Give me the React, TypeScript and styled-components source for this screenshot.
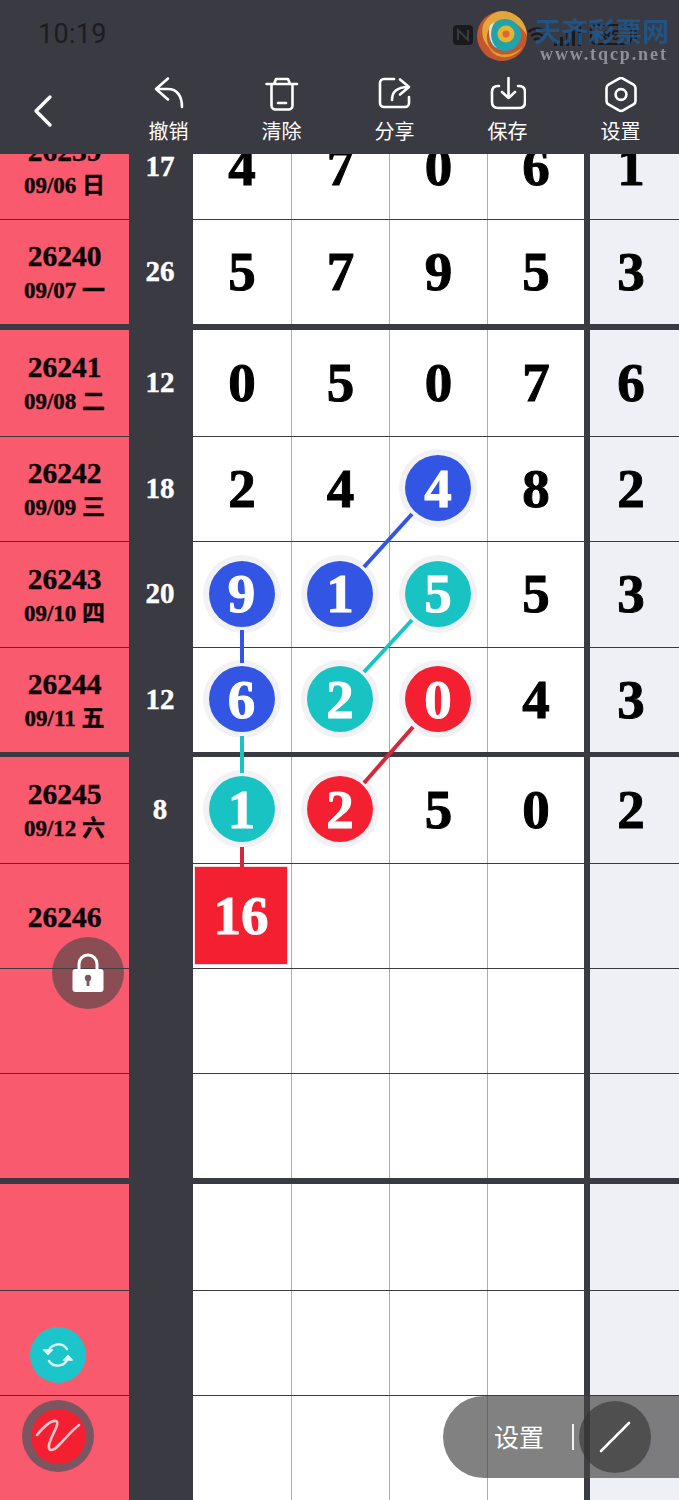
import React from "react";
import styled, { createGlobalStyle } from "styled-components";

const DARK = "#3a3a42";
const BLUE = "#3355e3";
const TEAL = "#19c3c4";
const RED = "#f42032";
const SERIF = `"Liberation Serif", "Noto Sans CJK SC", serif`;
const SANS = `"Noto Sans CJK SC", "Noto Sans", sans-serif`;

const Global = createGlobalStyle`
  html, body { margin: 0; padding: 0; background: ${DARK}; }
  #root { width: 679px; height: 1500px; }
`;

const Page = styled.div`
  position: relative;
  width: 679px;
  height: 1500px;
  overflow: hidden;
  background: ${DARK};
`;

const Header = styled.header`
  position: relative;
  z-index: 2;
  height: 154px;
  background: ${DARK};
  display: flex;
  flex-direction: column;
`;

const StatusBar = styled.div`
  height: 76px;
  flex: none;
  display: flex;
  align-items: center;
  justify-content: space-between;
  padding: 0 47px 7px 38px;
  box-sizing: border-box;
  color: #1c1c21;
`;

const Clock = styled.span`
  font: 400 27px/1 Roboto, sans-serif;
  letter-spacing: 0.3px;
`;

const StatusIcons = styled.div`
  display: flex;
  align-items: center;
  gap: 3px;
  opacity: 0.9;
`;

const NfcIcon = styled.svg`
  margin-right: 25px;
`;

const BatteryBox = styled.div`
  position: relative;
  width: 42px;
  height: 21px;
  border: 2px solid #16161b;
  border-radius: 6px;
  box-sizing: border-box;
  font: 700 14px/17px ${SANS};
  text-align: center;
  color: #17171c;

  &::after {
    content: "";
    position: absolute;
    right: -7px;
    top: 4px;
    width: 3px;
    height: 9px;
    border-radius: 1px;
    background: #16161b;
  }
`;

const Watermark = styled.div`
  position: absolute;
  left: 476px;
  top: 8px;
  width: 200px;
  height: 60px;
  filter: blur(0.6px);
`;

const WatermarkLogo = styled.svg`
  position: absolute;
  left: 0;
  top: 2px;
`;

const WatermarkTitle = styled.span`
  position: absolute;
  left: 58px;
  top: 8px;
  font: 700 27px/30px ${SANS};
  color: #1c5a95;
  opacity: 0.8;
  white-space: nowrap;
`;

const WatermarkUrl = styled.span`
  position: absolute;
  left: 64px;
  top: 36px;
  font: 700 18px/20px ${SERIF};
  letter-spacing: 1.9px;
  color: #8f8f96;
  white-space: nowrap;
`;

const Toolbar = styled.div`
  flex: 1;
  display: flex;
  align-items: flex-start;
`;

const BackButton = styled.div`
  width: 112px;
  flex: none;
  padding: 18px 0 0 32px;
  box-sizing: border-box;
`;

const Actions = styled.div`
  flex: 1;
  display: flex;
  padding-top: 1px;
`;

const ActionButton = styled.div`
  width: 113px;
  display: flex;
  flex-direction: column;
  align-items: center;
  gap: 6px;
  color: #fff;
  font: 400 20px/24px ${SANS};
`;

const Body = styled.main`
  height: 1346px;
  overflow: hidden;
`;

const Table = styled.div`
  margin-top: -39px;
`;

const Row = styled.div<{ $h: number; $line: number }>`
  display: grid;
  grid-template-columns: 129px 64px 99px 98px 98px 96px 6px 89px;
  height: ${(p) => p.$h}px;
  padding-bottom: ${(p) => p.$line}px;
  box-sizing: content-box;
  background: ${DARK};
`;

const Issue = styled.div`
  background: #fa5a6d;
  padding-top: 2px;
  display: flex;
  flex-direction: column;
  align-items: center;
  justify-content: center;
  color: #0b0508;
  font-family: ${SERIF};
  font-weight: 700;
  -webkit-text-stroke: 0.4px #0b0508;
`;

const IssueNo = styled.span`
  font-size: 29.5px;
  line-height: 34px;
`;

const IssueDate = styled.span`
  margin-top: 2px;
  font-size: 23px;
  line-height: 32px;
  white-space: pre;
`;

const Sum = styled.div`
  margin-right: 1px;
  display: flex;
  align-items: center;
  justify-content: center;
  padding: 0 1px 2px 0;
  font: 700 29px/1 ${SERIF};
  color: #fff;
  -webkit-text-stroke: 0.4px #fff;
`;

const Cell = styled.div<{ $alt?: boolean; $last?: boolean }>`
  background: ${(p) => (p.$alt ? "#efeff6" : "#fff")};
  display: flex;
  align-items: center;
  justify-content: center;
  padding: 0 ${(p) => (p.$alt ? 7 : 0)}px 2px 0;
  font: 700 55px/1 ${SERIF};
  color: #000;
  -webkit-text-stroke: 1px currentColor;
  border-right: ${(p) => (p.$alt || p.$last ? "none" : "1px solid #adadad")};
`;

const Gutter = styled.div`
  background: ${DARK};
`;

const Ball = styled.div<{ $c: string }>`
  width: 66px;
  height: 66px;
  flex: none;
  border-radius: 50%;
  background: ${(p) => p.$c};
  box-shadow: 0 0 0 6px #f2f2f5;
  display: flex;
  align-items: center;
  justify-content: center;
  color: #fff;
  margin-right: 1px;
`;

const SumSquare = styled.div`
  width: 92px;
  height: 97px;
  margin-right: 2px;
  box-sizing: border-box;
  background: ${RED};
  outline: 1px solid #f3d7da;
  display: flex;
  align-items: center;
  justify-content: center;
  color: #fff;
`;

const Links = styled.svg`
  position: absolute;
  left: 0;
  top: 0;
  z-index: 1;
  pointer-events: none;
`;

const LockButton = styled.div`
  position: absolute;
  z-index: 3;
  left: 52px;
  top: 937px;
  width: 72px;
  height: 72px;
  border-radius: 50%;
  background: rgba(70, 70, 70, 0.62);
  display: flex;
  align-items: center;
  justify-content: center;
`;

const RefreshButton = styled.div`
  position: absolute;
  z-index: 3;
  left: 30px;
  top: 1327px;
  width: 56px;
  height: 56px;
  border-radius: 50%;
  background: #1cc5c9;
  display: flex;
  align-items: center;
  justify-content: center;
`;

const PenButton = styled.div`
  position: absolute;
  z-index: 3;
  left: 22px;
  top: 1400px;
  width: 72px;
  height: 72px;
  border-radius: 50%;
  background: #7d5560;
  display: flex;
  align-items: center;
  justify-content: center;
`;

const PenInner = styled.div`
  width: 55px;
  height: 55px;
  border-radius: 50%;
  background: ${RED};
  display: flex;
  align-items: center;
  justify-content: center;
`;

const ToolPill = styled.div`
  position: absolute;
  z-index: 3;
  left: 443px;
  top: 1396px;
  width: 236px;
  height: 82px;
  border-radius: 41px 0 0 41px;
  background: rgba(70, 70, 70, 0.68);
  display: flex;
  align-items: center;
  color: #fff;
  font: 400 25px/1 ${SANS};
`;

const PillLabel = styled.span`
  margin-left: 51px;
  margin-bottom: 1px;
`;

const PillDivider = styled.span`
  width: 2px;
  height: 26px;
  margin-left: 28px;
  background: #f2f2f2;
`;

const PillKnob = styled.div`
  width: 72px;
  height: 72px;
  margin-left: 5px;
  border-radius: 50%;
  background: rgba(50, 50, 50, 0.6);
  display: flex;
  align-items: center;
  justify-content: center;
`;

type Val = string | { v: string; c: string } | { sq: string } | null;
interface RowData {
  no?: string;
  date?: string;
  sum?: string;
  cells: Val[];
  alt?: string;
  h: number;
  line: number;
}

const b = (v: string) => ({ v, c: BLUE });
const t = (v: string) => ({ v, c: TEAL });
const r = (v: string) => ({ v, c: RED });
const empty: Val[] = [null, null, null, null];

const rows: RowData[] = [
  { no: "26239", date: "09/06 日", sum: "17", cells: ["4", "7", "0", "6"], alt: "1", h: 104, line: 1 },
  { no: "26240", date: "09/07 一", sum: "26", cells: ["5", "7", "9", "5"], alt: "3", h: 104, line: 6 },
  { no: "26241", date: "09/08 二", sum: "12", cells: ["0", "5", "0", "7"], alt: "6", h: 106, line: 1 },
  { no: "26242", date: "09/09 三", sum: "18", cells: ["2", "4", b("4"), "8"], alt: "2", h: 104, line: 1 },
  { no: "26243", date: "09/10 四", sum: "20", cells: [b("9"), b("1"), t("5"), "5"], alt: "3", h: 105, line: 1 },
  { no: "26244", date: "09/11 五", sum: "12", cells: [b("6"), t("2"), r("0"), "4"], alt: "3", h: 104, line: 5 },
  { no: "26245", date: "09/12 六", sum: "8", cells: [t("1"), r("2"), "5", "0"], alt: "2", h: 106, line: 1 },
  { no: "26246", cells: [{ sq: "16" }, null, null, null], h: 104, line: 1 },
  { cells: empty, h: 104, line: 1 },
  { cells: empty, h: 104, line: 6 },
  { cells: empty, h: 106, line: 1 },
  { cells: empty, h: 104, line: 1 },
  { cells: empty, h: 104, line: 0 },
];

const links = [
  { c: BLUE, x1: 364, y1: 567, x2: 412, y2: 514 },
  { c: BLUE, x1: 242, y1: 630, x2: 242, y2: 663 },
  { c: TEAL, x1: 364, y1: 672, x2: 412, y2: 620 },
  { c: TEAL, x1: 242, y1: 736, x2: 242, y2: 773 },
  { c: "#d4283c", x1: 364, y1: 783, x2: 413, y2: 727 },
  { c: "#d4283c", x1: 242, y1: 847, x2: 242, y2: 867 },
];

function renderVal(v: Val) {
  if (v === null) return null;
  if (typeof v === "string") return v;
  if ("sq" in v) return <SumSquare>{v.sq}</SumSquare>;
  return <Ball $c={v.c}>{v.v}</Ball>;
}

const stroke = {
  fill: "none",
  stroke: "#fff",
  strokeWidth: 2.6,
  strokeLinecap: "round" as const,
  strokeLinejoin: "round" as const,
};

const actions: { label: string; icon: React.ReactNode }[] = [
  {
    label: "撤销",
    icon: (
      <svg width="36" height="36" viewBox="0 0 36 36" {...stroke}>
        <path d="M5 12 L17 1.5 M5 12 L17 22.5 M5 12 H17 C26 12 31 19 31 30" />
      </svg>
    ),
  },
  {
    label: "清除",
    icon: (
      <svg width="36" height="36" viewBox="0 0 36 36" {...stroke}>
        <path d="M2.5 7 H33 M10 7 L12 2 H24 L26 7 M7.5 7 V28.5 a4 4 0 0 0 4 4 H24.5 a4 4 0 0 0 4 -4 V7 M14 26 H22" />
      </svg>
    ),
  },
  {
    label: "分享",
    icon: (
      <svg width="36" height="36" viewBox="0 0 36 36" {...stroke}>
        <path d="M17 2 H7 a4 4 0 0 0 -4 4 V26 a4 4 0 0 0 4 4 H28 a4 4 0 0 0 4 -4 V20 M15 23 C15 15 20 10 31 10 M23 2.5 L32 10 L23 17.5" />
      </svg>
    ),
  },
  {
    label: "保存",
    icon: (
      <svg width="36" height="36" viewBox="0 0 36 36" {...stroke}>
        <path d="M9 9 H8 Q2 9 2 15 V25 Q2 31 8 31 H29 Q35 31 35 25 V15 Q35 9 29 9 H28 M18.5 1 V21 M12 15 L18.5 21 L25 15" />
      </svg>
    ),
  },
  {
    label: "设置",
    icon: (
      <svg width="36" height="36" viewBox="0 0 36 36" {...stroke}>
        <path d="M16 1.6 a4 4 0 0 1 4 0 L30.5 7.6 a4 4 0 0 1 2 3.4 V24 a4 4 0 0 1 -2 3.4 L20 33.4 a4 4 0 0 1 -4 0 L5.5 27.4 a4 4 0 0 1 -2 -3.4 V11 a4 4 0 0 1 2 -3.4 Z" />
        <circle cx="18" cy="17.5" r="5.4" />
      </svg>
    ),
  },
];

export default function App() {
  return (
    <Page>
      <Global />
      <Header>
        <StatusBar>
          <Clock>10:19</Clock>
          <StatusIcons>
            <NfcIcon width="22" height="22" viewBox="0 0 22 22">
              <rect x="1" y="1" width="20" height="20" rx="4" fill="#16161b" />
              <path d="M6 16 V6 L16 16 V6" fill="none" stroke="#3a3a42" strokeWidth="2" />
            </NfcIcon>
            <svg width="48" height="20" viewBox="0 0 48 20" fill="none" stroke="#16161b" strokeWidth="2.4">
              <path d="M26 7 Q35 0 44 7 M29 11 Q35 6 41 11 M32 15 Q35 12 38 15" />
            </svg>
            <svg width="34" height="24" viewBox="0 0 34 24" fill="#16161b">
              <rect x="1" y="18" width="3" height="5" />
              <rect x="7" y="14" width="3" height="9" />
              <rect x="13" y="10" width="3" height="13" />
              <rect x="19" y="6" width="3" height="17" />
              <rect x="25" y="2" width="3" height="21" />
            </svg>
            <BatteryBox>86</BatteryBox>
          </StatusIcons>
        </StatusBar>
        <Watermark>
          <WatermarkLogo width="52" height="52" viewBox="0 0 52 52">
            <circle cx="26" cy="26" r="25" fill="#c4552f" />
            <path d="M26 1 A25 25 0 0 1 51 26 C44 12 30 8 18 14 C10 19 9 30 14 38 C7 32 4 22 8 13 C12 6 18 2 26 1 Z" fill="#e3a63a" />
            <path d="M12 34 C18 47 36 48 46 37 C40 50 16 52 12 34 Z" fill="#d9a02f" />
            <circle cx="29" cy="25" r="16" fill="#21a2ad" />
            <path d="M19 12 C13 20 14 32 21 38 C15 36 11 24 14 15 Z" fill="#e8e2dc" />
            <circle cx="30" cy="24" r="8.5" fill="#e6b42c" />
            <circle cx="30" cy="24" r="3.5" fill="#d9683a" />
          </WatermarkLogo>
          <WatermarkTitle>天齐彩票网</WatermarkTitle>
          <WatermarkUrl>www.tqcp.net</WatermarkUrl>
        </Watermark>
        <Toolbar>
          <BackButton>
            <svg width="24" height="34" viewBox="0 0 24 34" fill="none" stroke="#fff" strokeWidth="3.4" strokeLinecap="round" strokeLinejoin="round">
              <path d="M18 3 L4 17 L18 31" />
            </svg>
          </BackButton>
          <Actions>
            {actions.map((a) => (
              <ActionButton key={a.label}>
                {a.icon}
                {a.label}
              </ActionButton>
            ))}
          </Actions>
        </Toolbar>
      </Header>
      <Body>
        <Table>
          {rows.map((row, i) => (
            <Row key={i} $h={row.h} $line={row.line}>
              <Issue>
                {row.no && <IssueNo>{row.no}</IssueNo>}
                {row.date && <IssueDate>{row.date}</IssueDate>}
              </Issue>
              <Sum>{row.sum}</Sum>
              {row.cells.map((c, j) => (
                <Cell key={j} $last={j === 3}>
                  {renderVal(c)}
                </Cell>
              ))}
              <Gutter />
              <Cell $alt>{row.alt}</Cell>
            </Row>
          ))}
        </Table>
      </Body>
      <Links width="679" height="1500" viewBox="0 0 679 1500">
        {links.map((l, i) => (
          <line key={i} x1={l.x1} y1={l.y1} x2={l.x2} y2={l.y2} stroke={l.c} strokeWidth="4" />
        ))}
      </Links>
      <LockButton>
        <svg width="34" height="40" viewBox="0 0 34 40">
          <path d="M8 18 V11 a9 9 0 0 1 18 0 V18" fill="none" stroke="#fff" strokeWidth="3" />
          <rect x="1.5" y="16" width="31" height="23" rx="3" fill="#fff" />
          <circle cx="17" cy="25" r="3.2" fill="#7d5560" />
          <rect x="15.6" y="26" width="2.8" height="7" fill="#7d5560" />
        </svg>
      </LockButton>
      <RefreshButton>
        <svg width="32" height="32" viewBox="0 0 32 32" fill="none" stroke="#e6fbfb" strokeWidth="2.4" strokeLinecap="round">
          <path d="M6 14 A10.5 10.5 0 0 1 25 10" />
          <path d="M26 18 A10.5 10.5 0 0 1 7 22" />
          <path d="M1.5 16 L6 11 L10.5 16 Z" fill="#e6fbfb" strokeWidth="1" strokeLinejoin="round" transform="rotate(180 6 13.5)" />
          <path d="M21.5 16 L26 21 L30.5 16 Z" fill="#e6fbfb" strokeWidth="1" strokeLinejoin="round" transform="rotate(180 26 18.5)" />
        </svg>
      </RefreshButton>
      <PenButton>
        <PenInner>
          <svg width="46" height="34" viewBox="0 0 46 34" fill="none" stroke="#fbc5cc" strokeWidth="2.6" strokeLinecap="round" strokeLinejoin="round">
            <path d="M2 16 C8 8 16 1 21 2 C26 4 15 18 14 26 C13 33 18 32 23 27 C30 20 36 12 44 6" />
          </svg>
        </PenInner>
      </PenButton>
      <ToolPill>
        <PillLabel>设置</PillLabel>
        <PillDivider />
        <PillKnob>
          <svg width="34" height="34" viewBox="0 0 34 34">
            <line x1="3" y1="31" x2="31" y2="3" stroke="#fff" strokeWidth="2.6" strokeLinecap="round" />
          </svg>
        </PillKnob>
      </ToolPill>
    </Page>
  );
}
